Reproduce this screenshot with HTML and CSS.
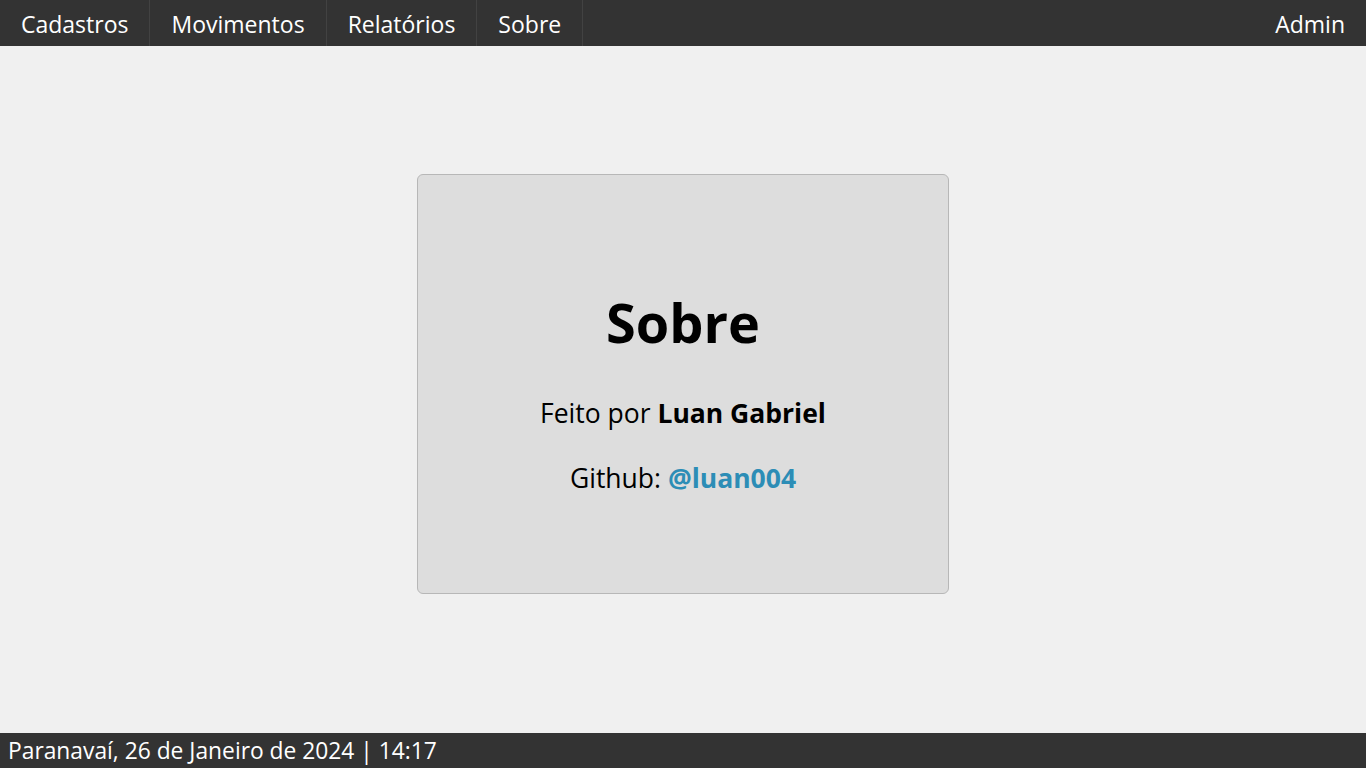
FILE: index.html
```html
<!DOCTYPE html>
<html lang="pt-BR">
<head>
<meta charset="utf-8">
<title>Sobre</title>
<link rel="stylesheet" href="styles.css">
</head>
<body>
<div class="page">
  <nav class="topbar">
    <ul class="menu">
      <li class="menu-item">Cadastros</li>
      <li class="menu-item">Movimentos</li>
      <li class="menu-item">Relatórios</li>
      <li class="menu-item">Sobre</li>
    </ul>
    <div class="user">Admin</div>
  </nav>
  <main class="content">
    <section class="card">
      <h1 class="card-title">Sobre</h1>
      <p class="card-line">Feito por <strong>Luan Gabriel</strong></p>
      <p class="card-line">Github: <a class="gh-link" href="#">@luan004</a></p>
    </section>
  </main>
  <footer class="statusbar">Paranavaí, 26 de Janeiro de 2024 | 14:17</footer>
</div>
</body>
</html>
```
FILE: styles.css
```css
* { box-sizing: border-box; }
html, body { margin: 0; padding: 0; height: 100%; }
body {
  font-family: "Open Sans", "Noto Sans", sans-serif;
  background: #f0f0f0;
  color: #000;
}
.page {
  display: flex;
  flex-direction: column;
  height: 100vh;
}
.topbar {
  height: 46px;
  background: #333333;
  color: #fff;
  display: flex;
  justify-content: space-between;
  align-items: stretch;
  flex: none;
}
.menu {
  list-style: none;
  margin: 0;
  padding: 0;
  display: flex;
}
.menu-item {
  display: flex;
  align-items: center;
  padding: 1px 21px 0;
  font-size: 23px;
  border-right: 1px solid #424242;
}
.user {
  display: flex;
  align-items: center;
  padding: 1px 21px 0;
  font-size: 23px;
}
.content {
  flex: 1;
  display: flex;
  align-items: center;
  justify-content: center;
  padding-bottom: 11px;
}
.card {
  width: 532px;
  height: 420px;
  background: #dddddd;
  border: 1px solid #b7b7b7;
  border-radius: 6px;
  display: flex;
  flex-direction: column;
  align-items: center;
  padding-top: 115px;
  text-align: center;
}
.card-title {
  margin: 0 0 40px;
  font-size: 54px;
  font-weight: 700;
  line-height: 65px;
}
.card-line {
  margin: 0 0 28px;
  font-size: 26.5px;
  line-height: 37px;
}
.card-line strong { font-weight: 700; }
.gh-link {
  color: #2c8db6;
  font-weight: 700;
  text-decoration: none;
}
.statusbar {
  height: 35px;
  flex: none;
  background: #333333;
  color: #fff;
  font-size: 22.8px;
  padding: 0 8px;
  display: flex;
  align-items: center;
}
```
